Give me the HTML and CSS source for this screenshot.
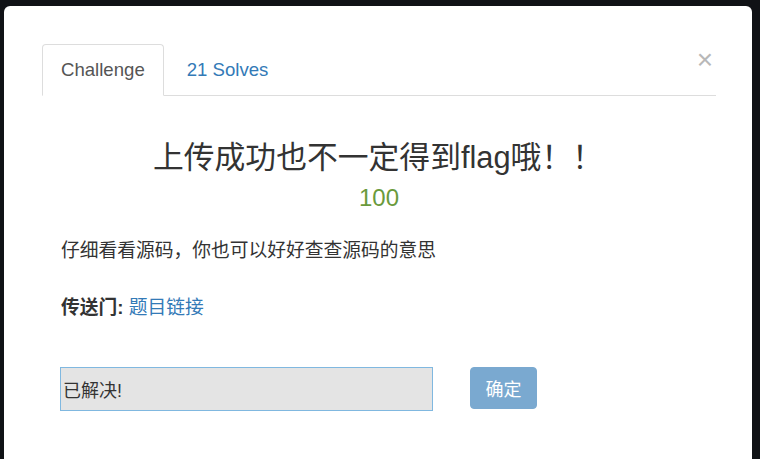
FILE: index.html
```html
<!DOCTYPE html>
<html lang="zh-CN">
<head>
    <meta charset="UTF-8">
    <meta name="viewport" content="width=device-width, initial-scale=1.0">
    <title>Challenge</title>
    <link rel="stylesheet" href="styles.css">
</head>
<body>
    <div class="backdrop">
        <div class="modal">
            <button class="close">&times;</button>
            <ul class="tabs">
                <li class="tab active"><a href="#">Challenge</a></li>
                <li class="tab"><a href="#">21 Solves</a></li>
            </ul>
            <div class="challenge">
                <h3 class="title">上传成功也不一定得到flag哦！！</h3>
                <p class="points">100</p>
                <p class="desc">仔细看看源码，你也可以好好查查源码的意思</p>
                <p class="portal"><b>传送门:</b> <a href="#">题目链接</a></p>
                <form class="submit-row">
                    <input type="text" class="answer" value="已解决!" readonly>
                    <button type="button" class="submit" disabled>确定</button>
                </form>
            </div>
        </div>
    </div>
</body>
</html>
```

FILE: styles.css
```css
body {
    margin: 0;
    background: #101216;
    font-family: 'Liberation Sans', 'Noto Sans CJK SC', sans-serif;
    color: #333;
}

.backdrop {
    height: 100vh;
    overflow: hidden;
    padding: 6px 8px 0 4px;
    box-sizing: border-box;
}

.modal {
    position: relative;
    background: #fff;
    border-radius: 6px 6px 0 0;
    height: 100%;
    padding: 38px 36px 0 38px;
    box-sizing: border-box;
}

.close {
    position: absolute;
    top: 40px;
    right: 39px;
    border: none;
    background: transparent;
    font-size: 28px;
    line-height: 1;
    color: #b8b8b8;
    padding: 0;
    font-family: 'Liberation Sans', sans-serif;
}

.tabs {
    display: flex;
    list-style: none;
    margin: 0;
    padding: 0;
    border-bottom: 1px solid #ddd;
}

.tab {
    margin-bottom: -1px;
    margin-right: 4px;
}

.tab a {
    display: block;
    padding: 11px 18px 11px 18px;
    line-height: 28px;
    font-size: 18.6px;
    color: #337ab7;
    text-decoration: none;
    border: 1px solid transparent;
    border-radius: 4px 4px 0 0;
}

.tab.active a {
    color: #555;
    background: #fff;
    border-color: #ddd;
    border-bottom-color: #fff;
}

.challenge {
    display: flex;
    flex-direction: column;
}

.title {
    margin: 45px 0 0;
    text-align: center;
    font-size: 30.8px;
    font-weight: normal;
    line-height: 1.1;
    color: #333;
    padding-right: 2px;
}

.points {
    margin: 10px 0 0;
    text-align: center;
    font-size: 24px;
    line-height: 1.1;
    color: #6a9a3c;
}

.desc {
    margin: 27px 0 0 19px;
    font-size: 18.75px;
    line-height: 26px;
}

.portal {
    margin: 31px 0 0 19px;
    font-size: 18.75px;
    line-height: 26px;
}

.portal a {
    color: #337ab7;
    text-decoration: none;
}

.submit-row {
    display: flex;
    gap: 37px;
    margin: 46px 0 0 18px;
    align-items: flex-start;
}

.answer {
    width: 373px;
    height: 44px;
    box-sizing: border-box;
    border: 1px solid #80b8e0;
    background: #e4e4e4;
    font-family: 'Liberation Sans', 'Noto Sans CJK SC', sans-serif;
    font-size: 18px;
    color: #333;
    padding: 0 2px;
    outline: none;
}

.submit {
    width: 67px;
    height: 42px;
    border: 1px solid #7aa9d0;
    border-radius: 4px;
    background: #7aa9d0;
    color: #fff;
    font-family: 'Liberation Sans', 'Noto Sans CJK SC', sans-serif;
    font-size: 18px;
    padding: 0;
}
```
